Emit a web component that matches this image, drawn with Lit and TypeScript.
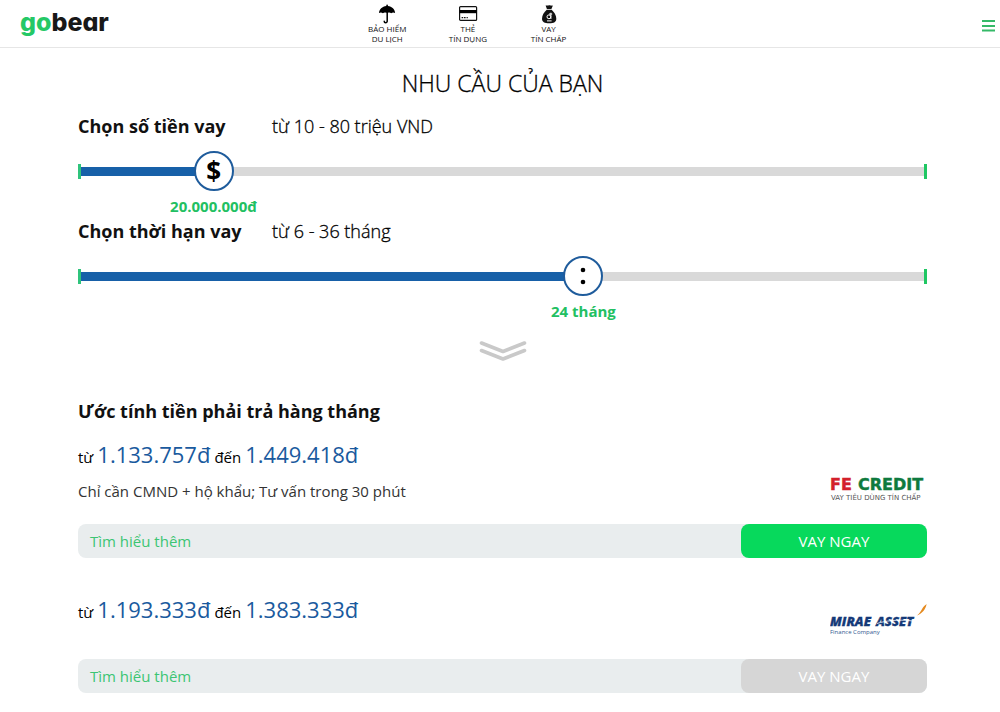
import { LitElement, html, css, svg } from "lit";
import { customElement, property, state } from "lit/decorators.js";

const umbrella = svg`<svg width="20" height="20" viewBox="0 0 20 20" aria-hidden="true">
  <path fill="#000" d="M9.3 1.2a.8.8 0 0 1 1.6 0v.7c4 .4 7.100 3.300 7.200 7.200-1.300-.900-2.700-.900-3.900.200-.900-.700-2-.900-3.200-.500h-1.900c-1.200-.400-2.300-.200-3.200.500-1.200-1.100-2.600-1.100-3.900-.200.1-3.900 3.300-6.800 7.300-7.200z"/>
  <path fill="none" stroke="#000" stroke-width="1.500" stroke-linecap="round" d="M10.200 8v9.200a1.500 1.500 0 0 1-3 0"/>
</svg>`;

const card = svg`<svg width="20" height="20" viewBox="0 0 20 20" aria-hidden="true">
  <rect x="1.600" y="2.600" width="17" height="13.800" rx="1" fill="#fff" stroke="#111" stroke-width="1.200"/>
  <rect x="1.500" y="6" width="17.200" height="3.200" fill="#000"/>
  <path stroke="#111" stroke-width="1.300" d="M3.600 13.700h1.600M6 13.700h1.600M8.600 13.700h1.200"/>
</svg>`;

const bag = svg`<svg width="20" height="20" viewBox="0 0 20 20" aria-hidden="true">
  <path fill="#111" d="M6.600 1.600c1-.6 1.800.3 2.700-.1.900-.5 1.500-.4 2.300.100.700.4 1.300-.4 2.200.2L12.400 5H7.900z"/>
  <path fill="#111" d="M7.700 5.700h4.900c2.600 2.300 4.700 5.600 4.700 9 0 3.200-2.300 4.500-7.100 4.500S3 17.900 3 14.700c0-3.400 2.100-6.700 4.700-9z"/>
  <g fill="none" stroke="#fff" stroke-width="1"><circle cx="9.900" cy="12.800" r="1.900"/><path d="M11.900 8.700v6.300M10 10h3.200M8 16.900h4.600"/></g>
</svg>`;

const feLogo = html`<svg width="97" height="28" viewBox="0 0 97 28" role="img" aria-label="FE Credit">
  <g font-family="DejaVu Sans, Verdana, sans-serif" font-weight="700" font-size="16" stroke-width=".4">
    <text x="0" y="17" fill="#d3202b" stroke="#d3202b">FE</text>
    <text x="28" y="17" fill="#0e7a3e" stroke="#0e7a3e">CREDIT</text>
  </g>
  <text x="1" y="27" font-family="DejaVu Sans, Verdana, sans-serif" font-size="7" fill="#555">VAY TIÊU DÙNG TÍN CHẤP</text>
</svg>`;

const miraeLogo = html`<svg width="97" height="32" viewBox="0 0 97 32" role="img" aria-label="Mirae Asset Finance Company">
  <g font-family="Open Sans, sans-serif" font-style="italic" font-weight="800" font-size="13" fill="#153a78" stroke="#153a78" stroke-width=".3">
    <text x="0" y="22">MIRAE</text><text x="46" y="22">ASSET</text>
  </g>
  <path fill="none" stroke="#fff" stroke-width=".8" d="M47 19.500c8-2.500 20-4.500 36-2.500"/>
  <path fill="#e58a1f" d="M96.600 0c-1 1.200-2.500 1.800-3.800 3.700-1.800 2.600-2.300 5-5.800 7.800 4.800-2 8.500-5.500 9.600-11.500z"/>
  <text x="0" y="30" font-family="Open Sans, sans-serif" font-size="6" fill="#31588f">Finance Company</text>
</svg>`;

@customElement("loan-slider")
class LoanSlider extends LitElement {
  @property() label = "";
  @property() hint = "";
  @property() glyph = "";
  @property({ type: Number }) min = 0;
  @property({ type: Number }) max = 100;
  @property({ type: Number }) value = 0;
  @property({ attribute: false }) format: (n: number) => string = String;

  static styles = css`
    :host { display: block; }
    .head { display: flex; font-size: 18px; line-height: 26px; color: #111; }
    .name { flex: 0 0 194px; font-weight: 700; }
    .hint { font-weight: 300; color: #000; -webkit-text-stroke: 0.3px #000; }
    .slider { position: relative; height: 40px; margin: 12px 0 5px; }
    .range {
      appearance: none;
      display: block;
      width: 100%;
      height: 40px;
      margin: 0;
      background:
        linear-gradient(#2fc47c, #2fc47c) left center / 3px 15px no-repeat,
        linear-gradient(#1fc763, #1fc763) right center / 3px 15px no-repeat,
        linear-gradient(#1760a8, #1760a8) left center / var(--fill) 9px no-repeat,
        linear-gradient(#d9d9d9, #d9d9d9) center / 100% 9px no-repeat;
      cursor: pointer;
    }
    .range::-webkit-slider-thumb {
      appearance: none;
      box-sizing: border-box;
      width: 40px;
      height: 40px;
      border: 2px solid #1f5c9c;
      border-radius: 50%;
      background: #fff;
    }
    .glyph {
      position: absolute;
      top: 0;
      left: var(--start);
      display: grid;
      place-items: center;
      width: 40px;
      height: 40px;
      font-size: 26px;
      line-height: 40px;
      font-weight: 700;
      color: #000;
      pointer-events: none;
    }
    .value {
      display: flex;
      justify-content: center;
      width: 40px;
      margin-left: var(--start);
      white-space: nowrap;
      font-size: 15px;
      line-height: 20px;
      font-weight: 700;
      color: #22c062;
    }
  `;

  render() {
    const ratio = (this.value - this.min) / (this.max - this.min);
    const start = `calc((100% - 40px) * ${ratio})`;
    return html`
      <div style=${`--start:${start};--fill:calc((100% - 40px) * ${ratio} + 20px)`}>
        <div class="head">
          <label class="name" for="range">${this.label}</label>
          <span class="hint">${this.hint}</span>
        </div>
        <div class="slider">
          <input class="range" id="range" type="range" .min=${String(this.min)} .max=${String(this.max)}
            .value=${String(this.value)}
            @input=${(e: Event) => { this.value = Number((e.target as HTMLInputElement).value); }} />
          <span class="glyph" aria-hidden="true">${this.glyph === ":"
            ? svg`<svg width="6" height="18" viewBox="0 0 6 18"><circle cx="3" cy="3" r="2.300"/><circle cx="3" cy="15" r="2.300"/></svg>`
            : this.glyph}</span>
        </div>
        <output class="value" for="range">${this.format(this.value)}</output>
      </div>
    `;
  }
}

@customElement("app-root")
class AppRoot extends LitElement {
  @state() private offers = [
    { from: "1.133.757đ", to: "1.449.418đ", note: "Chỉ cần CMND + hộ khẩu; Tư vấn trong 30 phút", logo: feLogo, open: true },
    { from: "1.193.333đ", to: "1.383.333đ", note: "", logo: miraeLogo, open: false },
  ];

  static styles = css`
    :host {
      display: block;
      min-height: 100vh;
      background: #fff;
      color: #111;
      font-family: "Open Sans", sans-serif;
    }
    .header {
      display: grid;
      grid-template-columns: 4fr 244px 5fr;
      align-items: center;
      height: 47px;
      padding: 0 5px 0 20px;
      border-bottom: 1px solid #e6e6e6;
    }
    .logo {
      padding-bottom: 4px;
      font-family: Inter, sans-serif;
      font-size: 25px;
      line-height: 32px;
      font-weight: 800;
      font-feature-settings: "cv11";
      color: #181818;
      text-decoration: none;
    }
    .go { color: #25c866; }
    .nav { display: grid; grid-template-columns: repeat(3, 1fr); padding-left: 2px; }
    .link {
      display: flex;
      flex-direction: column;
      align-items: center;
      text-align: center;
      font-size: 8px;
      line-height: 10px;
      font-weight: 400;
      color: #111;
      text-decoration: none;
    }
    .menu {
      justify-self: end;
      display: grid;
      margin-top: 4px;
      padding: 0;
      border: 0;
      background: none;
      cursor: pointer;
    }
    .main { padding: 20px 73px 19px 78px; }
    .title {
      margin: 0 0 15px;
      text-align: center;
      font-size: 23px;
      line-height: 30px;
      font-weight: 300;
      color: #000;
      -webkit-text-stroke: 0.3px #000;
    }
    .sliders { display: grid; gap: 2px; }
    .more { display: block; margin: 19px auto 36px; }
    .subtitle { margin: 0 0 14px; font-size: 18px; line-height: 26px; font-weight: 700; }
    .offers { display: grid; gap: 35px; }
    .info {
      display: flex;
      justify-content: space-between;
      box-sizing: border-box;
      min-height: 66px;
      padding-bottom: 23px;
    }
    .price { display: flex; align-items: baseline; gap: 4px; height: 34px; margin: 0; font-size: 15px; line-height: 32px; color: #000; }
    .sum { font-size: 22px; color: #1a5a9e; }
    .note { margin: 9px 0 0; font-size: 15px; line-height: 20px; color: #333; }
    .brand { display: grid; align-self: end; }
    .bar { display: flex; border-radius: 8px; background: #e9edee; font-size: 15px; line-height: 34px; }
    .learn { flex: 1; padding-left: 12px; color: #3cc573; text-decoration: none; }
    .apply {
      flex: 0 0 186px;
      padding: 0;
      border: 0;
      border-radius: 8px;
      background: #07d95c;
      color: #fff;
      font: inherit;
      cursor: pointer;
    }
    .apply:disabled { background: #d6d6d6; cursor: default; }
  `;

  render() {
    return html`
      <header class="header">
        <a class="logo" href="#"><span class="go">go</span>bear</a>
        <nav class="nav">
          <a class="link" href="#">${umbrella}<span>BẢO HIỂM<br />DU LỊCH</span></a>
          <a class="link" href="#">${card}<span>THẺ<br />TÍN DỤNG</span></a>
          <a class="link" href="#">${bag}<span>VAY<br />TÍN CHẤP</span></a>
        </nav>
        <button class="menu" aria-label="Menu">
          <svg width="13" height="12" viewBox="0 0 13 12"><path stroke="#35b968" stroke-width="2" d="M0 1h13M0 6h13M0 10.500h13"/></svg>
        </button>
      </header>
      <main class="main">
        <h1 class="title">NHU CẦU CỦA BẠN</h1>
        <div class="sliders">
          <loan-slider label="Chọn số tiền vay" hint="từ 10 - 80 triệu VND" glyph="$" min="10" max="80" value="20"
            .format=${(n: number) => `${n}.000.000đ`}></loan-slider>
          <loan-slider label="Chọn thời hạn vay" hint="từ 6 - 36 tháng" glyph=":" min="6" max="36" value="24"
            .format=${(n: number) => `${n} tháng`}></loan-slider>
        </div>
        <svg class="more" width="48" height="22" viewBox="0 0 48 22" aria-hidden="true">
          <path fill="none" stroke="#c9c9c9" stroke-width="3.600" stroke-linecap="round" stroke-linejoin="round" d="M2.500 3 24 11.500 45.500 3M2.500 10.500 24 19 45.500 10.500"/>
        </svg>
        <h2 class="subtitle">Ước tính tiền phải trả hàng tháng</h2>
        <div class="offers">
          ${this.offers.map((o) => html`
            <section>
              <div class="info">
                <div>
                  <p class="price"><span>từ</span><span class="sum">${o.from}</span><span>đến</span><span class="sum">${o.to}</span></p>
                  ${o.note ? html`<p class="note">${o.note}</p>` : null}
                </div>
                <div class="brand">${o.logo}</div>
              </div>
              <div class="bar">
                <a class="learn" href="#">Tìm hiểu thêm</a>
                <button class="apply" ?disabled=${!o.open}>VAY NGAY</button>
              </div>
            </section>
          `)}
        </div>
      </main>
    `;
  }
}
